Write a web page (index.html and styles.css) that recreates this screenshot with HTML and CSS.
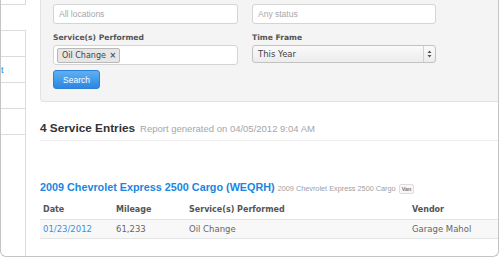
FILE: index.html
```html
<!DOCTYPE html>
<html lang="en">
<head>
    <meta charset="UTF-8">
    <title>Service Entries</title>
    <link rel="stylesheet" href="styles.css">
</head>
<body>

    <div class="frame">
        <div class="sidebar">
            <div class="side-top"></div>
            <ul class="side-nav">
                <li></li>
                <li><a href="#">t</a></li>
                <li></li>
                <li></li>
            </ul>
        </div>

        <div class="main">
            <div class="filters">
                <div class="filter-grid">
                    <div class="field">
                        <input type="text" class="input-field" placeholder="All locations">
                    </div>
                    <div class="field">
                        <input type="text" class="input-field" placeholder="Any status">
                    </div>
                    <div class="field">
                        <label>Service(s) Performed</label>
                        <div class="input-field tag-box">
                            <span class="tag">Oil Change <span class="tag-x">&times;</span></span>
                        </div>
                    </div>
                    <div class="field">
                        <label>Time Frame</label>
                        <div class="select-box">
                            <span>This Year</span>
                            <span class="select-arrows">
                                <svg width="5" height="8" viewBox="0 0 5 8"><path d="M2.5 0.5 L4.5 3 L0.5 3 Z M2.5 7.5 L4.5 5 L0.5 5 Z" fill="#555"/></svg>
                            </span>
                        </div>
                    </div>
                </div>
                <button class="search-btn">Search</button>
            </div>

            <div class="report-head">
                <h2>4 Service Entries</h2>
                <span class="generated">Report generated on 04/05/2012 9:04 AM</span>
            </div>

            <div class="vehicle">
                <a href="#" class="vehicle-name">2009 Chevrolet Express 2500 Cargo (WEQRH)</a>
                <span class="vehicle-sub">2009 Chevrolet Express 2500 Cargo</span>
                <span class="badge">Van</span>
            </div>

            <table class="entries">
                <thead>
                    <tr>
                        <th class="col-date">Date</th>
                        <th class="col-miles">Mileage</th>
                        <th class="col-service">Service(s) Performed</th>
                        <th>Vendor</th>
                    </tr>
                </thead>
                <tbody>
                    <tr>
                        <td><a href="#">01/23/2012</a></td>
                        <td>61,233</td>
                        <td>Oil Change</td>
                        <td>Garage Mahol</td>
                    </tr>
                </tbody>
            </table>
        </div>
    </div>

</body>
</html>
```

FILE: styles.css
```css
body {
    margin: 0;
    background: white;
    font-family: "Liberation Sans", Arial, sans-serif;
}

.frame {
    width: 497px;
    height: 256px;
    display: flex;
    border: 1px solid #c4c4c4;
    border-top: none;
    border-radius: 0 0 6px 6px;
    overflow: hidden;
    background: white;
}

/* Sidebar */
.sidebar {
    width: 25px;
    display: flex;
    flex-direction: column;
    flex-shrink: 0;
}

.side-top {
    height: 4px;
    border-bottom: 1px solid #dcdcdc;
    border-right: 1px solid #dcdcdc;
}

.side-nav {
    list-style: none;
    margin: 25px 0 0 0;
    padding: 0;
    flex: 1;
    border-right: 1px solid #dcdcdc;
}

.side-nav li {
    height: 25px;
    border-top: 1px solid #dcdcdc;
    display: flex;
    align-items: center;
    padding-left: 0;
    font-size: 9px;
}

.side-nav li:last-child {
    border-bottom: 1px solid #dcdcdc;
}

.side-nav a {
    color: #1a86e0;
    text-decoration: none;
}

/* Main */
.main {
    flex: 1;
    padding-left: 14px;
    min-width: 0;
}

.filters {
    background: #f4f4f4;
    border-left: 1px solid #e2e2e2;
    border-bottom: 1px solid #e2e2e2;
    border-bottom-left-radius: 4px;
    padding: 4px 0 12px 12px;
}

.filter-grid {
    display: grid;
    grid-template-columns: 185px 184px;
    column-gap: 14px;
    row-gap: 8px;
}

.field label {
    display: block;
    font-family: "DejaVu Sans", Verdana, sans-serif;
    font-weight: bold;
    font-size: 7.6px;
    color: #555;
    margin: 1px 0 3px 0;
}

.input-field {
    box-sizing: border-box;
    width: 100%;
    height: 20px;
    border: 1px solid #d4d4d4;
    border-radius: 3px;
    background: white;
    padding: 0 5px;
    font-family: "Liberation Sans", Arial, sans-serif;
    font-size: 8.5px;
    margin: 0;
    display: block;
}

.input-field::placeholder {
    color: #a8a8a8;
}

.tag-box {
    display: flex;
    align-items: center;
    padding: 0 3px;
}

.tag {
    font-family: "DejaVu Sans", Verdana, sans-serif;
    font-size: 8px;
    color: #444;
    background: #e6e6e6;
    border: 1px solid #b8b8b8;
    border-radius: 2px;
    padding: 1px 3px 1px 4px;
    line-height: 11px;
}

.tag-x {
    margin-left: 1px;
    color: #555;
    font-weight: bold;
}

.select-box {
    box-sizing: border-box;
    height: 18px;
    border: 1px solid #c2c2c2;
    border-radius: 3px;
    background: linear-gradient(#fafafa, #ececec);
    display: flex;
    align-items: center;
    justify-content: space-between;
    padding-left: 5px;
    font-family: "DejaVu Sans", Verdana, sans-serif;
    font-size: 8.5px;
    color: #444;
}

.select-arrows {
    width: 11px;
    height: 100%;
    border-left: 1px solid #d2d2d2;
    display: flex;
    align-items: center;
    justify-content: center;
}

.search-btn {
    margin-top: 5px;
    width: 47px;
    height: 19px;
    border: 1px solid #2f7fd4;
    border-radius: 3px;
    background: linear-gradient(#5db1f2, #2c86e2);
    color: white;
    font-family: "Liberation Sans", Arial, sans-serif;
    font-size: 8.5px;
    padding: 0;
    cursor: pointer;
}

/* Report */
.report-head {
    margin-top: 19px;
    padding-bottom: 5px;
    border-bottom: 1px solid #ececec;
    display: flex;
    align-items: baseline;
    gap: 5px;
}

.report-head h2 {
    margin: 0;
    font-size: 11.8px;
    color: #333;
}

.generated {
    font-size: 9.5px;
    color: #a6a6a6;
}

.vehicle {
    margin-top: 40px;
    display: flex;
    align-items: baseline;
    gap: 3px;
}

.vehicle-name {
    font-size: 10.8px;
    font-weight: bold;
    color: #1a86e0;
    text-decoration: none;
}

.vehicle-sub {
    font-size: 7.3px;
    color: #a0a0a0;
}

.badge {
    font-size: 5.5px;
    font-weight: bold;
    color: #777;
    border: 1px solid #ddd;
    background: #f7f7f7;
    border-radius: 2px;
    padding: 1px 2px;
}

.entries {
    margin-top: 9px;
    width: 100%;
    border-collapse: collapse;
    font-family: "DejaVu Sans", Verdana, sans-serif;
    text-align: left;
}

.entries th {
    font-size: 8px;
    color: #555;
    padding: 0 3px 3px 3px;
    height: 13px;
    border-bottom: 1px solid #e4e4e4;
}

.entries td {
    font-size: 8.5px;
    color: #666;
    padding: 0 3px;
    height: 18px;
    background: #f8f8f8;
    border-bottom: 1px solid #e4e4e4;
}

.entries td a {
    color: #3a92e2;
    text-decoration: none;
}

.col-date, .col-miles {
    width: 67px;
}

.col-service {
    width: 217px;
}
```
